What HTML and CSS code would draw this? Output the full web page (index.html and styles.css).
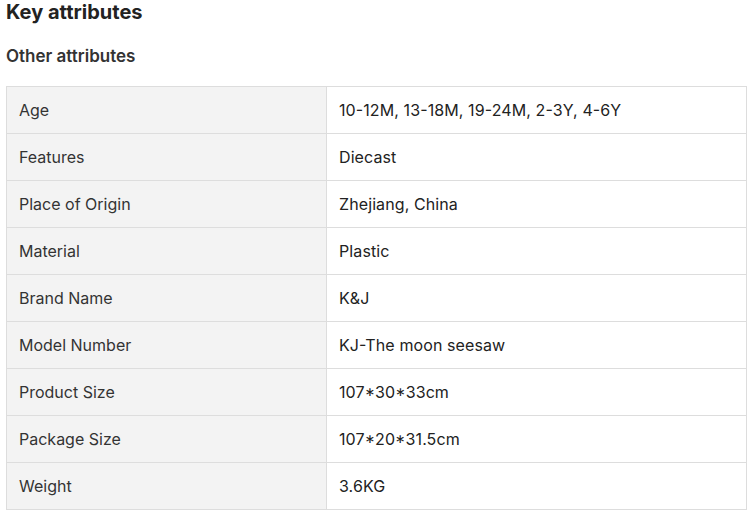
FILE: index.html
```html
<!DOCTYPE html>
<html>
<head>
<meta charset="utf-8">
<link rel="stylesheet" href="styles.css">
</head>
<body>
<div class="wrap">
  <h2 class="title">Key attributes</h2>
  <h3 class="subtitle">Other attributes</h3>
  <table class="attrs">
    <tr><td class="label">Age</td><td class="value">10-12M, 13-18M, 19-24M, 2-3Y, 4-6Y</td></tr>
    <tr><td class="label">Features</td><td class="value">Diecast</td></tr>
    <tr><td class="label">Place of Origin</td><td class="value">Zhejiang, China</td></tr>
    <tr><td class="label">Material</td><td class="value">Plastic</td></tr>
    <tr><td class="label">Brand Name</td><td class="value">K&amp;J</td></tr>
    <tr><td class="label">Model Number</td><td class="value">KJ-The moon seesaw</td></tr>
    <tr><td class="label">Product Size</td><td class="value">107*30*33cm</td></tr>
    <tr><td class="label">Package Size</td><td class="value">107*20*31.5cm</td></tr>
    <tr><td class="label">Weight</td><td class="value">3.6KG</td></tr>
  </table>
</div>
</body>
</html>
```
FILE: styles.css
```css
html, body { margin: 0; padding: 0; background: #fff; }
body { font-family: Inter, "Noto Sans", sans-serif; color: #222; }
.wrap { padding: 0 5px 0 6px; }
.title { margin: 0; padding-top: 0; font-size: 20px; font-weight: 700; line-height: 24px; color: #222; }
.subtitle { margin: 21px 0 0; font-size: 17px; font-weight: 600; line-height: 22px; color: #333; }
.attrs { margin-top: 19px; width: 741px; border-collapse: collapse; font-size: 16px; }
.attrs td { border: 1px solid #ddd; height: 47px; padding: 0 12px; box-sizing: border-box; line-height: 20px; }
.label { width: 320px; background: #f3f3f3; color: #333; }
.value { color: #222; letter-spacing: 0.1px; font-feature-settings: "case" 1; }
```
